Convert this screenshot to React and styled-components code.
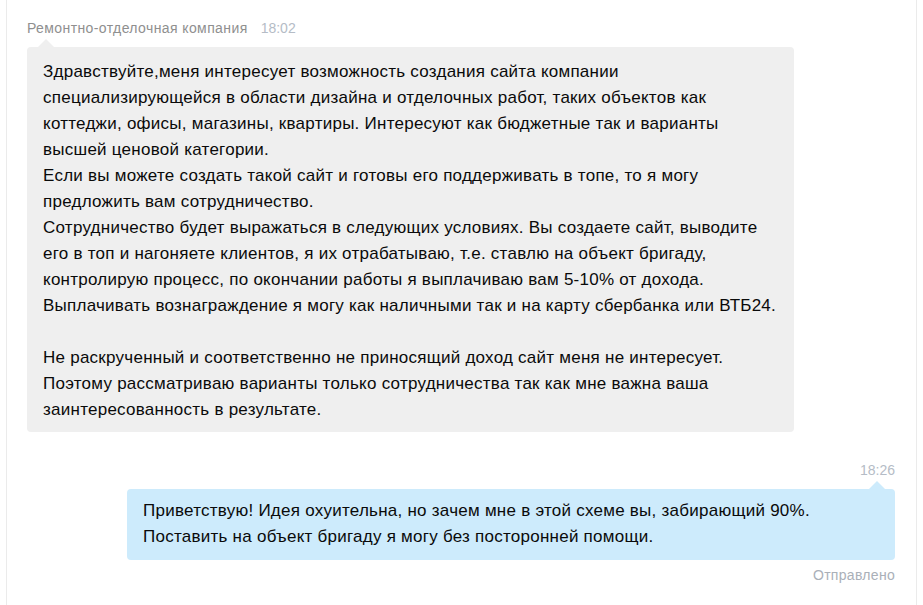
import React from "react";
import styled, { createGlobalStyle } from "styled-components";

const GlobalStyle = createGlobalStyle`
    html, body {
        margin:0;
        padding:0;
        background:#fff;
    }
    body {
        font-family:"Liberation Sans", Arial, sans-serif;
    }
`

const Wrapper = styled.div`
    height:605px;
    margin:0 6px 0 6px;
    border-left:1px solid #ebebeb;
    border-right:1px solid #ebebeb;
    padding:19px 21px 0 20px;
    box-sizing:border-box;
    display:flex;
    flex-direction:column;
`

const Message = styled.div`
    display:flex;
    flex-direction:column;
    align-items:${(p) => (p.$mine ? "flex-end" : "flex-start")};
`

const MetaRow = styled.div`
    display:flex;
    gap:13px;
    font-size:14px;
    line-height:18px;
    margin-bottom:10px;
`

const Author = styled.span`
    color:#8f8f8f;
    letter-spacing:0.4px;
`

const Time = styled.span`
    color:#b5bcc6;
`

const Bubble = styled.div`
    position:relative;
    box-sizing:border-box;
    width:${(p) => p.$width}px;
    padding:${(p) => p.$pad};
    border-radius:4px;
    background:${(p) => p.$bg};
    color:#0a0a0a;
    font-size:17px;
    letter-spacing:0.25px;
    line-height:26px;
    white-space:pre-line;

    &::before {
        content:"";
        position:absolute;
        top:-8px;
        ${(p) => (p.$mine ? "right:10px;" : "left:11px;")}
        border-left:8px solid transparent;
        border-right:8px solid transparent;
        border-bottom:8px solid ${(p) => p.$bg};
    }
`

const Status = styled.div`
    margin-top:6px;
    font-size:14px;
    line-height:18px;
    letter-spacing:0.3px;
    color:#aab0b8;
`

const Spacer = styled.div`
    height:29px;
`

const incoming = `Здравствуйте,меня интересует возможность создания сайта компании
специализирующейся в области дизайна и отделочных работ, таких объектов как
коттеджи, офисы, магазины, квартиры. Интересуют как бюджетные так и варианты
высшей ценовой категории.
Если вы можете создать такой сайт и готовы его поддерживать в топе, то я могу
предложить вам сотрудничество.
Сотрудничество будет выражаться в следующих условиях. Вы создаете сайт, выводите
его в топ и нагоняете клиентов, я их отрабатываю, т.е. ставлю на объект бригаду,
контролирую процесс, по окончании работы я выплачиваю вам 5-10% от дохода.
Выплачивать вознаграждение я могу как наличными так и на карту сбербанка или ВТБ24.

Не раскрученный и соответственно не приносящий доход сайт меня не интересует.
Поэтому рассматриваю варианты только сотрудничества так как мне важна ваша
заинтересованность в результате.`

const outgoing = `Приветствую! Идея охуительна, но зачем мне в этой схеме вы, забирающий 90%.
Поставить на объект бригаду я могу без посторонней помощи.`

function App() {
    return (
        <>
            <GlobalStyle />
            <Wrapper>
                <Message>
                    <MetaRow>
                        <Author>Ремонтно-отделочная компания</Author>
                        <Time>18:02</Time>
                    </MetaRow>
                    <Bubble $width={767} $bg="#efefef" $pad="12px 16px 9px 16px">
                        {incoming}
                    </Bubble>
                </Message>

                <Spacer />

                <Message $mine>
                    <MetaRow>
                        <Time>18:26</Time>
                    </MetaRow>
                    <Bubble $mine $width={768} $bg="#cdebfc" $pad="9px 16px 10px 16px">
                        {outgoing}
                    </Bubble>
                    <Status>Отправлено</Status>
                </Message>
            </Wrapper>
        </>
    )
}

export default App;
